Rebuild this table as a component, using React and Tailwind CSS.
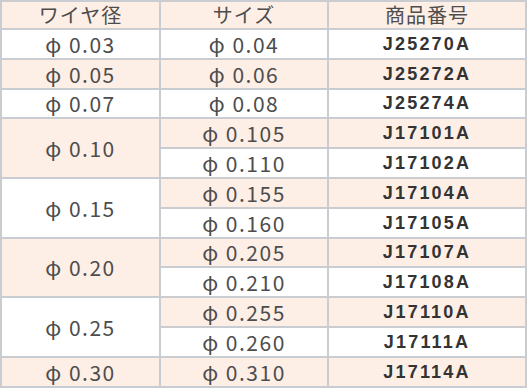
const rows = [
  { wire: '0.03', sizes: [['0.04', 'J25270A']] },
  { wire: '0.05', sizes: [['0.06', 'J25272A']] },
  { wire: '0.07', sizes: [['0.08', 'J25274A']] },
  { wire: '0.10', sizes: [['0.105', 'J17101A'], ['0.110', 'J17102A']] },
  { wire: '0.15', sizes: [['0.155', 'J17104A'], ['0.160', 'J17105A']] },
  { wire: '0.20', sizes: [['0.205', 'J17107A'], ['0.210', 'J17108A']] },
  { wire: '0.25', sizes: [['0.255', 'J17110A'], ['0.260', 'J17111A']] },
  { wire: '0.30', sizes: [['0.310', 'J17114A']] },
];

const peach = 'bg-[#fdeee6]';
const cell = 'border-2 border-[#c9cdd2] text-center p-0 leading-[22px]';
const num = "font-['Noto_Sans_CJK_JP',sans-serif] text-[21px] text-[#4d4d4d] tracking-[1.5px]";
const code = "font-['Liberation_Sans',Arial,sans-serif] font-bold text-[18px] text-[#333] tracking-[2.2px]";

export default function App() {
  let line = 0;
  const body = [];
  rows.forEach((r, gi) => {
    r.sizes.forEach(([size, part], si) => {
      const shade = line % 2 === 1 ? peach : 'bg-white';
      const groupShade = r.sizes.length > 1 ? (gi % 2 === 1 ? peach : 'bg-white') : shade;
      body.push(
        <tr key={part} className="h-[29.8px]">
          {si === 0 && (
            <td rowSpan={r.sizes.length} className={`${cell} ${num} ${groupShade}`}>
              φ&nbsp;{r.wire}
            </td>
          )}
          <td className={`${cell} ${num} ${shade}`}>φ&nbsp;{size}</td>
          <td className={`${cell} ${code} ${shade}`}>{part}</td>
        </tr>
      );
      line++;
    });
  });

  return (
    <div className="w-[527px] h-[389px] bg-white overflow-hidden">
      <table className="w-[527px] border-collapse table-fixed">
        <colgroup>
          <col className="w-[159px]" />
          <col className="w-[168px]" />
          <col />
        </colgroup>
        <thead>
          <tr className="h-[28px]">
            {['ワイヤ径', 'サイズ', '商品番号'].map(h => (
              <th key={h} className={`${cell} ${peach} font-['Noto_Sans_CJK_JP',sans-serif] font-normal text-[20px] text-[#4d4d4d] tracking-[1px]`}>
                {h}
              </th>
            ))}
          </tr>
        </thead>
        <tbody>{body}</tbody>
      </table>
    </div>
  );
}
